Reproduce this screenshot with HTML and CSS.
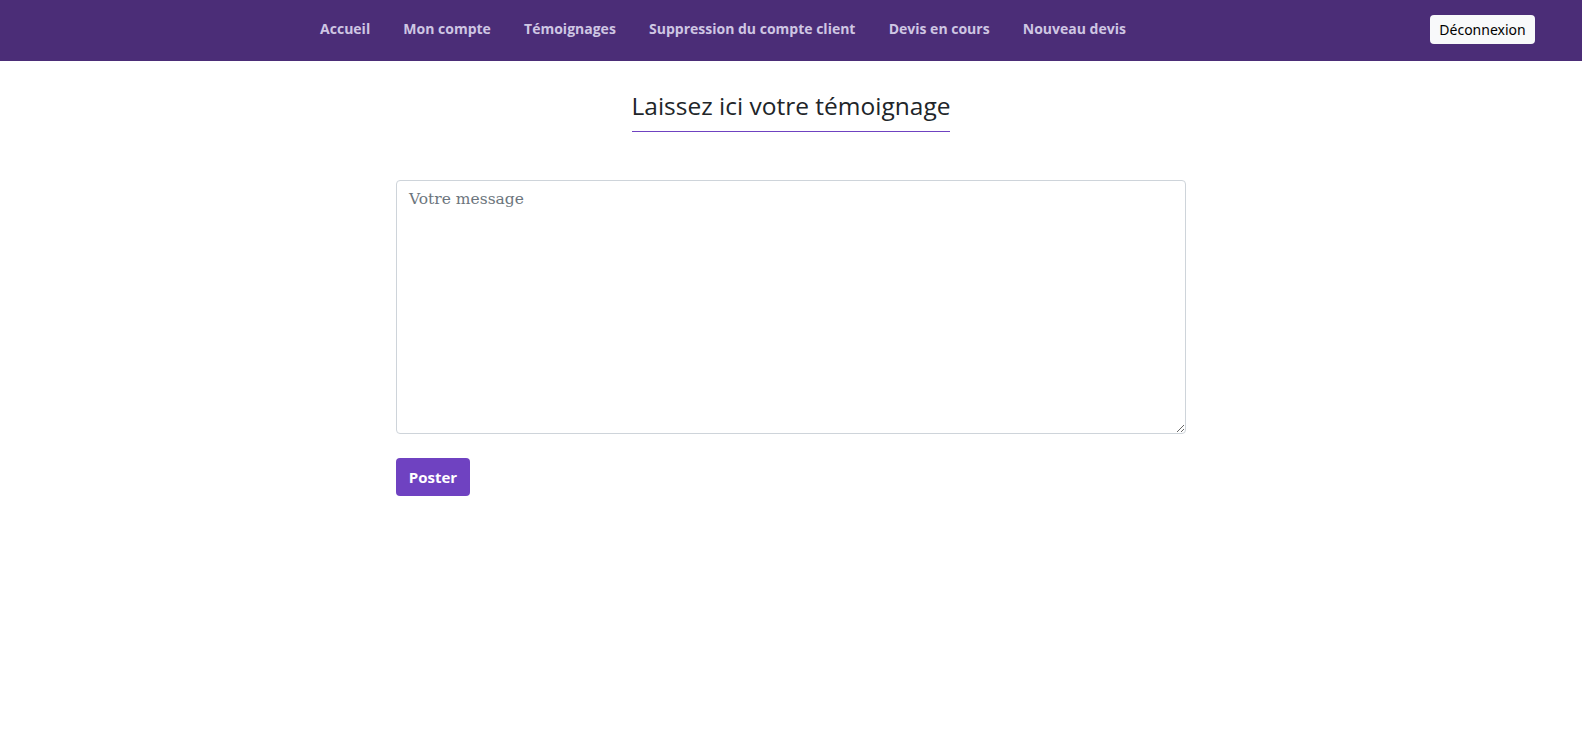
FILE: index.html
```html
<!DOCTYPE html>
<html lang="fr">
<head>
<meta charset="utf-8">
<title>Témoignages</title>
<link rel="stylesheet" href="styles.css">
</head>
<body>
<nav class="navbar">
  <ul class="nav-links">
    <li><a href="#">Accueil</a></li>
    <li><a href="#">Mon compte</a></li>
    <li><a href="#">Témoignages</a></li>
    <li><a href="#">Suppression du compte client</a></li>
    <li><a href="#">Devis en cours</a></li>
    <li><a href="#">Nouveau devis</a></li>
  </ul>
  <button class="logout">Déconnexion</button>
</nav>
<main class="content">
  <h1 class="title">Laissez ici votre témoignage</h1>
  <form class="form">
    <textarea class="message" placeholder="Votre message"></textarea>
    <button type="button" class="submit">Poster</button>
  </form>
</main>
</body>
</html>
```
FILE: styles.css
```css
* { box-sizing: border-box; }
body {
  margin: 0;
  font-family: "Open Sans", "Noto Sans", sans-serif;
  color: #212529;
  background: #fff;
}
.navbar {
  height: 61px;
  background: #4b2d77;
  display: flex;
  align-items: center;
  padding: 0 47px 2px 16px;
}
.nav-links {
  flex: 1;
  display: flex;
  justify-content: center;
  list-style: none;
  margin: 0 0 2px;
  padding: 0;
}
.nav-links a {
  display: block;
  padding: 8px 16.6px;
  color: #cfc6e3;
  text-decoration: none;
  font-weight: 700;
  font-size: 14px;
}
.logout {
  font-family: "Noto Sans", sans-serif;
  font-size: 14px;
  color: #000;
  background: #f8f9fa;
  border: none;
  border-radius: 4px;
  height: 29px;
  width: 105px;
  padding: 0;
}
.content {
  width: 790px;
  margin: 0 auto;
  display: flex;
  flex-direction: column;
  align-items: center;
}
.title {
  margin: 28px 0 0;
  font-weight: 400;
  font-size: 24.5px;
  line-height: 34px;
  padding-bottom: 8px;
  border-bottom: 1px solid #6f42c1;
}
.form {
  width: 100%;
  margin-top: 48px;
  display: flex;
  flex-direction: column;
  align-items: flex-start;
}
.message {
  width: 100%;
  height: 254px;
  border: 1px solid #ced4da;
  border-radius: 4px;
  padding: 6px 12px;
  font-family: "DejaVu Serif", "Liberation Serif", serif;
  font-size: 15.5px;
  line-height: 24px;
  resize: vertical;
}
.message::placeholder { color: #6c757d; }
.submit {
  margin-top: 24px;
  width: 74px;
  height: 38px;
  background: #6f42c1;
  color: #fff;
  border: none;
  border-radius: 4px;
  font-family: "Open Sans", sans-serif;
  font-weight: 700;
  font-size: 15px;
  padding: 0;
}
```
